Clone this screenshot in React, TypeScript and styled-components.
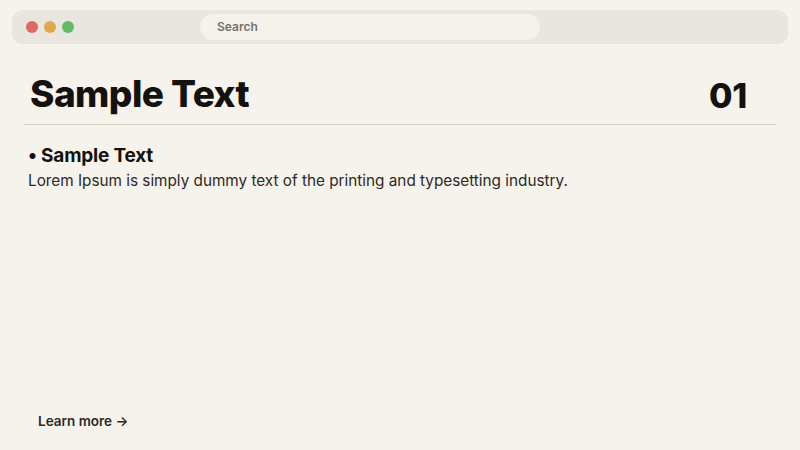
import React from "react";
import styled, { createGlobalStyle } from "styled-components";

const Global = createGlobalStyle`
  html, body { margin: 0; padding: 0; background: #f6f2ec; }
  body { font-family: Inter, "Noto Sans", sans-serif; width: 800px; height: 450px; overflow: hidden; }
  * { box-sizing: border-box; }
`;

const Page = styled.div`
  width: 800px;
  height: 450px;
  display: flex;
  flex-direction: column;
  padding: 10px 12px 0 12px;
`;

const Toolbar = styled.div`
  height: 34px;
  background: #e9e5df;
  border-radius: 10px;
  display: flex;
  align-items: center;
  padding-left: 14px;
`;

const Dots = styled.div`
  display: flex;
  gap: 6px;
`;

const Dot = styled.span<{ $c: string }>`
  width: 12px;
  height: 12px;
  border-radius: 50%;
  background: ${(p) => p.$c};
`;

const SearchPill = styled.div`
  margin-left: 126px;
  width: 340px;
  height: 26px;
  border-radius: 13px;
  background: #f5f1eb;
  display: flex;
  align-items: center;
  padding-left: 17px;
  font-size: 12px;
  font-weight: 600;
  color: #77716a;
  padding-bottom: 1px;
`;

const Header = styled.div`
  margin: 28px 0 0 12px;
  display: flex;
  justify-content: space-between;
  align-items: flex-end;
  padding: 0 41px 0 6px;
  height: 40px;
`;

const Title = styled.h1`
  margin: 0;
  font-size: 37px;
  font-weight: 800;
  color: #14110e;
  letter-spacing: -0.55px;
  line-height: 1;
`;

const Number = styled.div`
  font-size: 34px;
  font-weight: 800;
  color: #14110e;
  line-height: 1;
  letter-spacing: -0.3px;
  transform: translateY(1px);
`;

const Divider = styled.hr`
  margin: 12px 0 0 12px;
  width: 752px;
  border: none;
  border-top: 1px solid #d5d0bf;
`;

const Section = styled.div`
  margin: 20px 0 0 16px;
`;

const Bullet = styled.h2`
  margin: 0;
  font-size: 19px;
  font-weight: 700;
  color: #14110e;
  line-height: 22px;
  letter-spacing: -0.2px;
`;

const Para = styled.p`
  margin: 4px 0 0 0;
  font-size: 15.3px;
  color: #2d2925;
  line-height: 20px;
`;

const Spacer = styled.div`
  flex: 1;
`;

const Learn = styled.a`
  margin: 0 0 21px 26px;
  font-size: 13.5px;
  font-weight: 600;
  color: #2d2925;
  text-decoration: none;
`;

export default function App() {
  return (
    <>
      <Global />
      <Page>
        <Toolbar>
          <Dots>
            <Dot $c="#dc6a66" />
            <Dot $c="#dfa84a" />
            <Dot $c="#62b96a" />
          </Dots>
          <SearchPill>Search</SearchPill>
        </Toolbar>
        <Header>
          <Title>Sample Text</Title>
          <Number>01</Number>
        </Header>
        <Divider />
        <Section>
          <Bullet>• Sample Text</Bullet>
          <Para>Lorem Ipsum is simply dummy text of the printing and typesetting industry.</Para>
        </Section>
        <Spacer />
        <Learn href="#">Learn more →</Learn>
      </Page>
    </>
  );
}
